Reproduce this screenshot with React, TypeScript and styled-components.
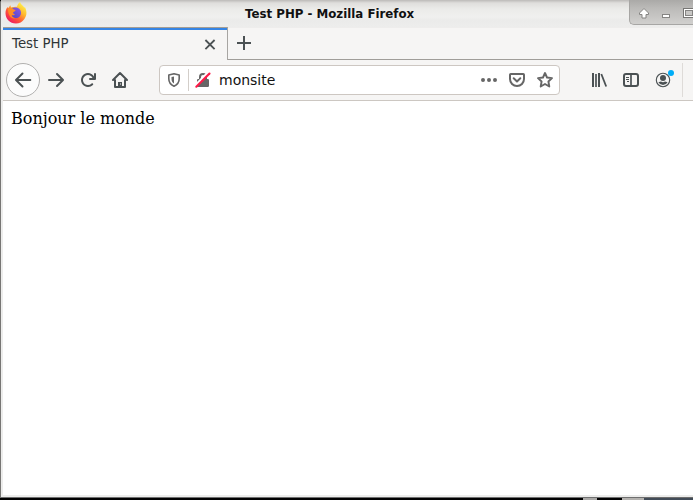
import React from 'react';
import styled, { createGlobalStyle } from 'styled-components';

const Global = createGlobalStyle`
  * { box-sizing: border-box; }
  body { margin: 0; background: #000; overflow: hidden; }
`;

const Desktop = styled.div`
  width: 693px;
  height: 500px;
  display: flex;
  flex-direction: column;
  overflow: hidden;
  background: #000;
  font-family: "DejaVu Sans", sans-serif;
`;
const Window = styled.div`
  height: 498px;
  flex: none;
  display: flex;
  flex-direction: column;
  border-left: 1px solid #777674;
  border-bottom: 1px solid #6f6f6f;
  border-top-left-radius: 3px;
  background: #ededec;
`;
const TitleBar = styled.header`
  height: 27px;
  flex: none;
  display: flex;
  background: linear-gradient(#bcbab8 0, #dfdedc 3px, #ebebe9 9px, #f0f0ef 17px, #ebebea 20px, #ededec 27px);
`;
const Logo = styled.svg`
  width: 22px;
  height: 22px;
  margin: 2px 0 0 4px;
  flex: none;
`;
const Title = styled.div`
  width: 602px;
  padding-left: 218px;
  font-size: 11.8px;
  line-height: 28px;
  font-weight: bold;
  color: #111;
  white-space: nowrap;
`;
const Controls = styled.div`
  width: 64px;
  height: 25px;
  flex: none;
  border: solid #a7a6a4;
  border-width: 0 0 1px 1px;
  border-bottom-left-radius: 5px;
  background: linear-gradient(#aaa9a7, #bbbab8 8px, #d1d0ce);
`;
const Client = styled.main`
  flex: 1;
  display: flex;
  flex-direction: column;
  margin: 0 0 2px 2px;
  background: #fff;
`;
const TabStrip = styled.div`
  height: 33px;
  flex: none;
  display: flex;
  background: #f6f5f4;
`;
const Tab = styled.div`
  width: 225px;
  height: 33px;
  flex: none;
  display: flex;
  border-top: 1px solid #a39d94;
  border-right: 1px solid #a7a5a2;
  box-shadow: inset 0 2px #3584e4;
  padding: 0 9px 1px 9px;
  justify-content: space-between;
  align-items: center;
  font-size: 13.33px;
  color: #2e3436;
`;
const StripRest = styled.div`
  flex: 1;
  border-top: 1px solid #eeedec;
  border-bottom: 1px solid #a09d99;
  padding: 7px 0 0 8px;
`;
const NavBar = styled.nav`
  height: 41px;
  flex: none;
  display: flex;
  align-items: center;
  border-bottom: 1px solid #ccc7c2;
  background: #f6f5f4;
`;
const BackButton = styled.div`
  width: 34px;
  height: 34px;
  margin-left: 3px;
  flex: none;
  border: 1px solid #b1b0af;
  border-radius: 50%;
  background: #fcfcfc;
  display: grid;
  place-items: center;
`;
const Slot = styled.div<{ $gap?: number }>`
  width: 16px;
  height: 16px;
  flex: none;
  margin-left: ${(p) => p.$gap ?? 16}px;
`;
const Glyph = styled.svg<{ $color?: string }>`
  display: block;
  width: 16px;
  height: 16px;
  overflow: visible;
  color: ${(p) => p.$color ?? '#4b5153'};
`;
const UrlBar = styled.div`
  width: 401px;
  height: 30px;
  margin-left: 31px;
  flex: none;
  display: flex;
  align-items: center;
  border: 1px solid #cdc7c2;
  border-radius: 4px;
  background: #fff;
`;
const Divider = styled.div<{ $gap: number; $height: number; $color?: string }>`
  width: 1px;
  height: ${(p) => p.$height}px;
  margin-left: ${(p) => p.$gap}px;
  flex: none;
  background: ${(p) => p.$color ?? '#d3cec9'};
`;
const Address = styled.div`
  width: 253px;
  margin-left: 8px;
  font-size: 14px;
  line-height: 20px;
  color: #111;
`;
const Page = styled.article`
  flex: 1;
  padding: 8px;
  font: 16px/19px "DejaVu Serif", serif;
  color: #000;
`;
const Panel = styled.footer`
  height: 2px;
  flex: none;
  display: flex;
`;
const Strip = styled.div<{ $w: number; $c: string }>`
  width: ${(p) => p.$w}px;
  background: ${(p) => p.$c};
`;

const arrow = 'M15 7H3.414l4.293-4.293a1 1 0 0 0-1.414-1.414l-6 6a1 1 0 0 0 0 1.414l6 6a1 1 0 0 0 1.414-1.414L3.414 9H15a1 1 0 0 0 0-2z';
const backArrow = 'M15.300 7H3.414l4.793-4.793a1 1 0 0 0-1.414-1.414l-6.500 6.500a1 1 0 0 0 0 1.414l6.500 6.500a1 1 0 0 0 1.414-1.414L3.414 9H15.300a1 1 0 0 0 0-2z';

function Icon({ children, color }: { children: React.ReactNode; color?: string }) {
  return (
    <Glyph viewBox="0 0 16 16" fill="none" stroke="currentColor" strokeWidth="2" strokeLinecap="round" strokeLinejoin="round" $color={color}>
      {children}
    </Glyph>
  );
}

function FirefoxLogo() {
  return (
    <Logo viewBox="0 0 22 22">
      <defs>
        <linearGradient id="flame" x1="0.85" y1="0.1" x2="0.2" y2="0.95">
          <stop offset="0" stopColor="#fff14b" />
          <stop offset="0.35" stopColor="#ffb72d" />
          <stop offset="0.65" stopColor="#ff5a35" />
          <stop offset="1" stopColor="#ee1763" />
        </linearGradient>
        <linearGradient id="globe" x1="1" y1="0" x2="0.2" y2="1">
          <stop offset="0" stopColor="#9059e8" />
          <stop offset="1" stopColor="#5346c5" />
        </linearGradient>
      </defs>
      <path fill="url(#flame)" d="M15 0c.6 2.600 3.200 3.500 4.400 5.800l.5-.9c2.200 4.200 2.100 8.700-.5 12.100C17.300 20 14.300 21.500 10.900 21.500 5 21.500.5 17 .5 11.300c0-2.600.7-4.500 2.100-6.200l.5 1.100L5.400 3.200l.6 2.200C8 5 9.500 5 12 4.800 12.500 2.500 13.500 1.200 15 0z" />
      <path fill="url(#globe)" d="M6.500 7C8.500 5.200 12 5 14.200 6.800c2.300 2 2.500 5.500.5 7.700-2.100 2.200-6 2.200-7.700-.3-1.400-2-1.700-5.200-.5-7.200z" />
      <path fill="#ff8d25" d="M3 7c2-1.600 3.700-1 4.700-.4.7.9 1.700 1.200 3 1.300-.2 1.400-2.300 1.500-2.600 2.500.2 1.300 1 1.900 2 2-.8 1-2.400 1.200-3.400.7.1 1.700 1.500 3.100 3.900 3C6.500 17.500 2.900 13.500 3 7z" />
    </Logo>
  );
}

function WindowControls() {
  return (
    <Controls>
      <svg width="63" height="24" viewBox="0 0 63 24" fill="none">
        <path d="M14 8.500l4.500 4.500v1.500h-2.500v3.500h-4v-3.500H9.500V13z" fill="#fff" stroke="#858482" />
        <rect x="32.500" y="14.500" width="7" height="3" fill="#fff" stroke="#858482" />
        <rect x="53.500" y="8.500" width="10" height="9" fill="#fff" stroke="#777674" />
        <rect x="55.500" y="10.500" width="7" height="5" fill="#c8c7c5" stroke="#858482" />
      </svg>
    </Controls>
  );
}

export default function App() {
  return (
    <Desktop>
      <Global />
      <Window>
        <TitleBar>
          <FirefoxLogo />
          <Title>Test PHP - Mozilla Firefox</Title>
          <WindowControls />
        </TitleBar>
        <Client>
          <TabStrip>
            <Tab>
              <span>Test PHP</span>
              <Icon><path d="M3.400 4l9.200 9.200M12.600 4l-9.200 9.200" strokeWidth="1.800" strokeLinecap="butt" /></Icon>
            </Tab>
            <StripRest>
              <Icon><path d="M8 1v14M1 8h14" strokeLinecap="butt" /></Icon>
            </StripRest>
          </TabStrip>
          <NavBar>
            <BackButton>
              <Icon><path d={backArrow} fill="currentColor" stroke="none" /></Icon>
            </BackButton>
            <Slot $gap={8}><Icon><path d={arrow} transform="matrix(-1 0 0 1 16 0)" fill="currentColor" stroke="none" /></Icon></Slot>
            <Slot>
              <Icon><path fill="currentColor" stroke="none" d="M15 1a1 1 0 0 0-1 1v2.418A6.995 6.995 0 1 0 8 15a6.954 6.954 0 0 0 4.950-2.050 1 1 0 0 0-1.414-1.414A5.019 5.019 0 1 1 12.549 6H10a1 1 0 0 0 0 2h5a1 1 0 0 0 1-1V2a1 1 0 0 0-1-1z" /></Icon>
            </Slot>
            <Slot>
              <Icon>
                <path d="M1 8l7-7 7 7M3 8v6.900h10V8" />
                <path d="M6 15v-5h4v5z" fill="currentColor" stroke="none" />
                <path d="M8.500 11.500v1" stroke="#f6f5f4" strokeWidth="1" strokeLinecap="butt" />
              </Icon>
            </Slot>
            <UrlBar>
              <Slot $gap={6}>
                <Icon color="#666">
                  <path d="M8 1.800L13.200 3v3.800c0 3.400-2 6-5.200 7.400-3.200-1.400-5.200-4-5.200-7.400V3z" strokeWidth="1.600" />
                  <path d="M8 4.500v7c-1.600-1-2.500-2.500-2.500-4.500V5.100z" fill="currentColor" stroke="none" />
                </Icon>
              </Slot>
              <Divider $gap={6} $height={22} />
              <Slot $gap={6}>
                <Icon color="#666">
                  <path d="M5 7V5a3 3 0 0 1 6 0v2" />
                  <rect x="2" y="7" width="12" height="8" rx="1.200" fill="currentColor" stroke="none" />
                  <path d="M0 14L13 1" stroke="#fff" strokeWidth="3" strokeLinecap="butt" />
                  <path d="M1.300 14.700L14.500 1.500" stroke="#ff1a48" strokeWidth="2.100" />
                </Icon>
              </Slot>
              <Address>monsite</Address>
              <Slot $gap={9}>
                <Icon color="#666"><path fill="currentColor" stroke="none" d="M2 6a2 2 0 1 0 0 4 2 2 0 0 0 0-4m6 0a2 2 0 1 0 0 4 2 2 0 0 0 0-4m6 0a2 2 0 1 0 0 4 2 2 0 0 0 0-4" /></Icon>
              </Slot>
              <Slot $gap={12}>
                <Icon color="#666"><path d="M1.800 2h12.400q.8 0 .8.800V7a7 7 0 0 1-14 0V2.800q0-.8.8-.8zM4.700 6.300L8 9.400l3.300-3.100" /></Icon>
              </Slot>
              <Slot $gap={12}>
                <Icon color="#666"><path d="M8 1l2 4.500 5 .6-3.600 3.400.9 5L8 12l-4.300 2.500.9-5L1 6.100l5-.6z" strokeWidth="1.900" /></Icon>
              </Slot>
            </UrlBar>
            <Slot $gap={31}>
              <Icon>
                <path d="M2 1v14M8 1v14" strokeLinecap="butt" />
                <path d="M5 2v13" strokeLinecap="butt" strokeWidth="1.700" />
                <path d="M10.300 2l4.900 12.500" strokeLinecap="butt" strokeWidth="1.800" />
              </Icon>
            </Slot>
            <Slot>
              <Icon>
                <rect x="1" y="2" width="14" height="12" rx="2" />
                <path d="M8 2v12" strokeWidth="1.700" />
                <path d="M3 5.500h3M3 7.500h3M4 9.500h2" strokeWidth="1" strokeLinecap="butt" />
              </Icon>
            </Slot>
            <Slot>
              <Icon>
                <circle cx="8" cy="8" r="6.700" strokeWidth="1.100" />
                <circle cx="8" cy="6" r="3" fill="currentColor" stroke="none" />
                <path d="M3.400 10.200q2-.6 2.600-.6Q8 11 10 9.600q.6 0 2.600.6A5.200 5.200 0 0 1 3.400 10.200z" fill="currentColor" stroke="none" />
                <circle cx="16" cy="1" r="3" fill="#00adf7" stroke="none" />
              </Icon>
            </Slot>
            <Divider $gap={11} $height={34} $color="#dedbd8" />
          </NavBar>
          <Page>Bonjour le monde</Page>
        </Client>
      </Window>
      <Panel>
        <Strip $w={583} $c="#000" />
        <Strip $w={14} $c="#aaa9a7" />
        <Strip $w={25} $c="#000" />
        <Strip $w={22} $c="#b4b2af" />
        <Strip $w={49} $c="#414b57" />
      </Panel>
    </Desktop>
  );
}
